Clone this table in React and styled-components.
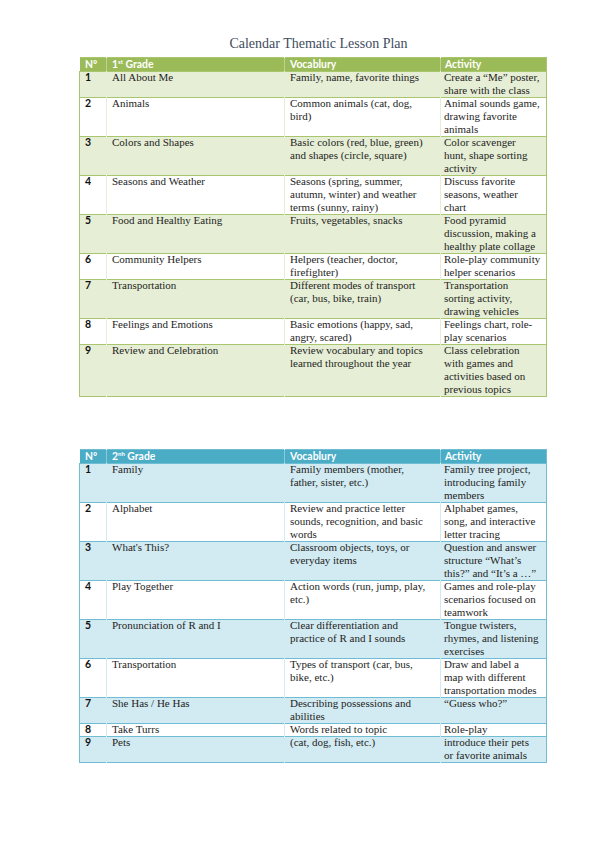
import React from "react";
import styled, { createGlobalStyle } from "styled-components";

const GlobalStyle = createGlobalStyle`
  body {
    margin: 0;
    background: #ffffff;
    font-family: "Liberation Serif", "Times New Roman", serif;
  }
`;

const palette = {
  green: { head: "#9bbb59", band: "#e6eed5", line: "#a9c56d" },
  blue: { head: "#4bacc6", band: "#d2eaf1", line: "#6fbdd2" },
};

// line breaks follow the printed document
const firstGrade = [
  ["All About Me", "Family, name, favorite things", "Create a \u201cMe\u201d poster,\nshare with the class"],
  ["Animals", "Common animals (cat, dog,\nbird)", "Animal sounds game,\ndrawing favorite\nanimals"],
  ["Colors and Shapes", "Basic colors (red, blue, green)\nand shapes (circle, square)", "Color scavenger\nhunt, shape sorting\nactivity"],
  ["Seasons and Weather", "Seasons (spring, summer,\nautumn, winter) and weather\nterms (sunny, rainy)", "Discuss favorite\nseasons, weather\nchart"],
  ["Food and Healthy Eating", "Fruits, vegetables, snacks", "Food pyramid\ndiscussion, making a\nhealthy plate collage"],
  ["Community Helpers", "Helpers (teacher, doctor,\nfirefighter)", "Role-play community\nhelper scenarios"],
  ["Transportation", "Different modes of transport\n(car, bus, bike, train)", "Transportation\nsorting activity,\ndrawing vehicles"],
  ["Feelings and Emotions", "Basic emotions (happy, sad,\nangry, scared)", "Feelings chart, role-\nplay scenarios"],
  ["Review and Celebration", "Review vocabulary and topics\nlearned throughout the year", "Class celebration\nwith games and\nactivities based on\nprevious topics"],
];

const secondGrade = [
  ["Family", "Family members (mother,\nfather, sister, etc.)", "Family tree project,\nintroducing family\nmembers"],
  ["Alphabet", "Review and practice letter\nsounds, recognition, and basic\nwords", "Alphabet games,\nsong, and interactive\nletter tracing"],
  ["What's This?", "Classroom objects, toys, or\neveryday items", "Question and answer\nstructure \u201cWhat\u2019s\nthis?\u201d and \u201cIt\u2019s a \u2026\u201d"],
  ["Play Together", "Action words (run, jump, play,\netc.)", "Games and role-play\nscenarios focused on\nteamwork"],
  ["Pronunciation of R and I", "Clear differentiation and\npractice of R and I sounds", "Tongue twisters,\nrhymes, and listening\nexercises"],
  ["Transportation", "Types of transport (car, bus,\nbike, etc.)", "Draw and label a\nmap with different\ntransportation modes"],
  ["She Has / He Has", "Describing possessions and\nabilities", "\u201cGuess who?\u201d"],
  ["Take Turrs", "Words related to topic", "Role-play"],
  ["Pets", "(cat, dog, fish, etc.)", "introduce their pets\nor favorite animals"],
];

const Page = styled.div`
  width: 596px;
  min-height: 842px;
  padding: 35px 48px 0 79px;
  box-sizing: border-box;
  display: flex;
  flex-direction: column;
`;

const Title = styled.h1`
  margin: 0 0 4px;
  font-family: "Liberation Serif", "Times New Roman", serif;
  font-weight: normal;
  font-size: 14px;
  line-height: 18px;
  color: #3e4c5e;
  text-align: center;
  padding-left: 10px;
`;

const Table = styled.table`
  width: 467px;
  table-layout: fixed;
  border-collapse: collapse;
  border: 1px solid ${(p) => palette[p.$tone].line};
  margin-bottom: ${(p) => p.$gap || 0}px;
`;

const HeadCell = styled.th`
  background: ${(p) => palette[p.$tone].head};
  color: #ffffff;
  font-family: Lato, "Open Sans", sans-serif;
  font-weight: bold;
  font-size: 10.4px;
  line-height: 13px;
  text-align: left;
  padding: 0 0 0 ${(p) => p.$pad || 5}px;
  border-left: 1px solid rgba(255, 255, 255, 0.35);
  white-space: nowrap;

  sup {
    font-size: 6px;
    line-height: 0;
  }
`;

const Row = styled.tr`
  background: ${(p) => (p.$band ? palette[p.$tone].band : "#ffffff")};
`;

const Cell = styled.td`
  vertical-align: top;
  padding: 0 1px 0 ${(p) => p.$pad || 5}px;
  font-family: "Liberation Serif", "Times New Roman", serif;
  font-size: 11px;
  line-height: 13px;
  color: #1e1e1e;
  white-space: pre-line;
  border-left: 1px solid ${(p) => palette[p.$tone].band};
  box-shadow: inset 0 1px 0 ${(p) => palette[p.$tone].line};
`;

const NumCell = styled(Cell)`
  font-family: Lato, "Open Sans", sans-serif;
  font-weight: bold;
  font-size: 10.5px;
  color: #111111;
  border-left: none;
`;

const LessonTable = ({ tone, grade, suffix, rows, gap }) => (
  <Table $tone={tone} $gap={gap}>
    <colgroup>
      <col style={{ width: 27 }} />
      <col style={{ width: 178 }} />
      <col style={{ width: 156 }} />
      <col style={{ width: 106 }} />
    </colgroup>
    <thead>
      <tr>
        <HeadCell $tone={tone}>Nº</HeadCell>
        <HeadCell $tone={tone}>
          {grade}
          <sup>{suffix}</sup> Grade
        </HeadCell>
        <HeadCell $tone={tone}>Vocablury</HeadCell>
        <HeadCell $tone={tone} $pad={4}>Activity</HeadCell>
      </tr>
    </thead>
    <tbody>
      {rows.map(([topic, vocab, activity], i) => (
        <Row key={i} $tone={tone} $band={i % 2 === 0}>
          <NumCell $tone={tone}>{i + 1}</NumCell>
          <Cell $tone={tone}>{topic}</Cell>
          <Cell $tone={tone}>{vocab}</Cell>
          <Cell $tone={tone} $pad={3}>{activity}</Cell>
        </Row>
      ))}
    </tbody>
  </Table>
);

export default function App() {
  return (
    <Page>
      <GlobalStyle />
      <Title>Calendar Thematic Lesson Plan</Title>
      <LessonTable tone="green" grade="1" suffix="st" rows={firstGrade} gap={52} />
      <LessonTable tone="blue" grade="2" suffix="nh" rows={secondGrade} />
    </Page>
  );
}
